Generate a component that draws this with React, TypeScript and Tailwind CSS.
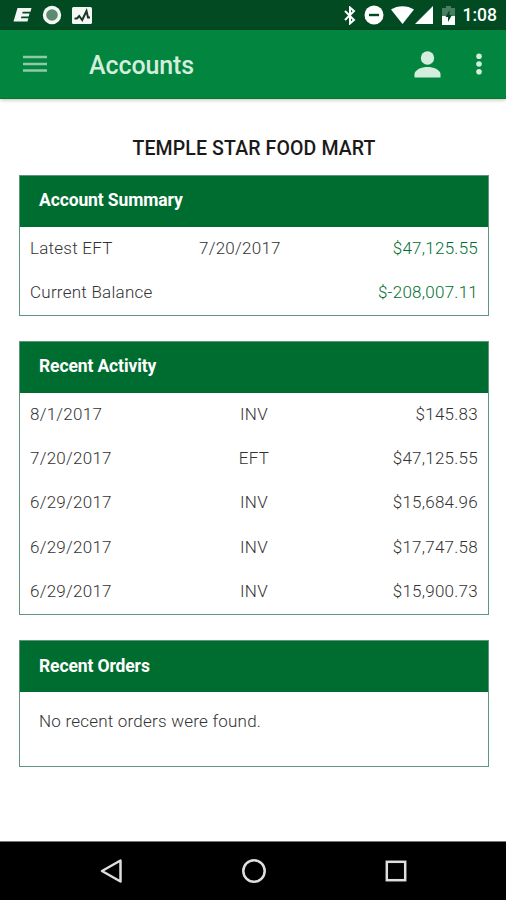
import React from 'react';

const summary = [
  { label: 'Latest EFT', date: '7/20/2017', amount: '$47,125.55' },
  { label: 'Current Balance', date: '', amount: '$-208,007.11' },
];

const activity = [
  { date: '8/1/2017', type: 'INV', amount: '$145.83' },
  { date: '7/20/2017', type: 'EFT', amount: '$47,125.55' },
  { date: '6/29/2017', type: 'INV', amount: '$15,684.96' },
  { date: '6/29/2017', type: 'INV', amount: '$17,747.58' },
  { date: '6/29/2017', type: 'INV', amount: '$15,900.73' },
];

const StatusBar: React.FC = () => (
  <div className="flex h-[30px] items-center justify-between bg-[#024a22] pl-[13px] pr-[9px] text-white">
    <div className="flex items-center gap-[11px]">
      <svg width="19" height="16" viewBox="0 0 19 16" fill="#f4f8f4">
        <path d="M4.500 1H18.500l-1 3.700H9.700L9.200 6.600H16.500L15.700 9.500H8.400l-.5 1.800h7.500L14.500 14.500H.5z" />
      </svg>
      <svg className="-ml-px" width="20" height="20" viewBox="0 0 20 20">
        <circle cx="10" cy="10" r="9.2" fill="#f4f8f4" />
        <circle cx="10" cy="10" r="5.8" fill="#5c8a70" />
      </svg>
      <svg className="-ml-px" width="20" height="17" viewBox="0 0 20 17">
        <rect width="20" height="17" rx="1.5" fill="#f4f8f4" />
        <path d="M2.500 11.500h2.500l2.200-2.500 3 4L14.500 4l1.500 6.500h2" fill="none" stroke="#1d3527" strokeWidth="2" />
      </svg>
    </div>

    <div className="flex items-center">
      <svg className="mr-[7px]" width="14" height="19" viewBox="0 0 14 19" fill="none" stroke="white" strokeWidth="2">
        <path d="m2 5 9 9-4 3.500V1.500l4 3.500-9 9" />
      </svg>
      <svg className="mr-[7px]" width="20" height="20" viewBox="0 0 20 20">
        <circle cx="10" cy="10" r="9.500" fill="white" />
        <path d="M5 10h10" stroke="#024a22" strokeWidth="2.400" />
      </svg>
      <svg className="mr-[1px]" width="23" height="18" viewBox="0 0 23 18" fill="white">
        <path d="M0 3.500C6.500-1 16.500-1 23 3.500L11.500 18z" />
      </svg>
      <svg className="mr-[9px]" width="18" height="18" viewBox="0 0 18 18" fill="white">
        <path d="M18 0v18H0z" />
      </svg>
      <svg className="mr-[8px]" width="13" height="19" viewBox="0 0 13 19">
        <path d="M4 0h5v2h4v8H0V2h4z" fill="#4b7d62" />
        <path d="M0 10h13v9H0z" fill="white" />
        <path d="M7.500 4 3.500 11h2.500v5l4-7H7.500z" fill="#024a22" />
      </svg>
      <span className="relative top-px text-[17.500px] font-medium leading-none">1:08</span>
    </div>
  </div>
);

const Toolbar: React.FC = () => (
  <header className="flex h-[69px] items-center border-b border-[#067822] bg-[#02853f] pl-[23px] pr-[24px] text-[#d3eedd] shadow-[0_1px_4px_rgba(0,0,0,0.25)]">
    <svg width="24" height="18" viewBox="0 0 24 18" stroke="#8fcaa8" strokeWidth="2.600">
      <path d="M0 2h24M0 9h24M0 15.500h24" />
    </svg>
    <h1 className="relative top-px ml-[42px] flex-1 text-[25px] font-medium leading-none tracking-[-0.100px]">Accounts</h1>
    <svg width="27" height="27" viewBox="0 0 27 27" fill="#d3eedd">
      <circle cx="13.500" cy="7" r="6.700" />
      <path d="M.5 26.500v-3.200C.5 18.500 8 16 13.500 16s13 2.500 13 7.300v3.200z" />
    </svg>
    <svg className="ml-[35px]" width="6" height="22" viewBox="0 0 6 22" fill="#d3eedd">
      <circle cx="3" cy="3.300" r="2.800" />
      <circle cx="3" cy="11" r="2.800" />
      <circle cx="3" cy="18.700" r="2.800" />
    </svg>
  </header>
);

const Card: React.FC<{ title: string; children: React.ReactNode }> = ({ title, children }) => (
  <section className="mb-[25px] border border-[#5f957a]">
    <h2 className="flex h-[51px] items-center bg-[#006d30] pb-[2px] pl-[19px] text-[17.500px] font-bold tracking-[-0.120px] text-white">
      {title}
    </h2>
    {children}
  </section>
);

export default function App() {
  return (
    <div className="flex h-[900px] w-[506px] flex-col overflow-hidden bg-white font-['Roboto',sans-serif]">
      <StatusBar />
      <Toolbar />

      <main className="flex-1 pl-[19px] pr-[17px] text-[#333333]">
        <div className="flex h-[76px] items-end justify-center pb-[14px] text-[19.500px] font-medium leading-[24px] tracking-[0.130px] text-[#1a1a1a]">
          TEMPLE STAR FOOD MART
        </div>

        <Card title="Account Summary">
          {summary.map(row => (
            <div key={row.label} className="flex h-[44px] items-center px-[10px] pb-px text-[17px] font-light tracking-[0.250px]">
              <span className="w-[169px]">{row.label}</span>
              <span className="flex-1">{row.date}</span>
              <span className="text-[#00702f]">{row.amount}</span>
            </div>
          ))}
        </Card>

        <Card title="Recent Activity">
          {activity.map((row, i) => (
            <div key={i} className="grid h-[44.250px] grid-cols-3 items-center px-[10px] pb-px text-[17px] font-light tracking-[0.250px]">
              <span>{row.date}</span>
              <span className="text-center">{row.type}</span>
              <span className="text-right">{row.amount}</span>
            </div>
          ))}
        </Card>

        <Card title="Recent Orders">
          <p className="h-[74px] pl-[19px] pt-[17px] text-[17px] font-light leading-[24px] tracking-[0.220px]">
            No recent orders were found.
          </p>
        </Card>
      </main>

      {/* System navigation */}
      <nav className="flex h-[59px] items-center justify-between border-t border-[#777777] bg-black pl-[100px] pr-[99px]">
        <svg width="23" height="26" viewBox="0 0 23 26" fill="none" stroke="#dedede" strokeWidth="2.500" strokeLinejoin="round">
          <path d="M20.500 2.500v21L2 13z" />
        </svg>
        <svg className="-ml-px" width="26" height="26" viewBox="0 0 26 26" fill="none" stroke="#dedede" strokeWidth="2.500">
          <circle cx="13" cy="13" r="10.700" />
        </svg>
        <svg width="22" height="22" viewBox="0 0 22 22" fill="none" stroke="#dedede" strokeWidth="2.500">
          <rect x="1.800" y="1.800" width="18.400" height="18.400" />
        </svg>
      </nav>
    </div>
  );
}
